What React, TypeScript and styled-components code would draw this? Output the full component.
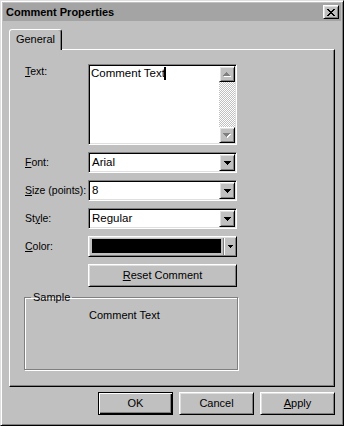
import styled, { createGlobalStyle, css } from 'styled-components';

const GlobalStyle = createGlobalStyle`
  html, body {
    margin: 0;
    padding: 0;
    background: #c0c0c0;
  }
  body {
    font-family: "Liberation Sans", Arial, sans-serif;
    font-size: 10.5px;
    line-height: 13px;
    color: #000;
  }
  * { box-sizing: border-box; }
`;

const raised = css`
  border: 1px solid;
  border-color: #fff #000 #000 #fff;
  box-shadow: inset 1px 1px #dfdfdf, inset -1px -1px #808080;
  background: #c0c0c0;
`;

const sunken = css`
  border: 1px solid;
  border-color: #808080 #fff #fff #808080;
  box-shadow: inset 1px 1px #000, inset -1px -1px #dfdfdf;
  padding: 1px;
`;

const Window = styled.div`
  width: 344px;
  height: 426px;
  background: #c0c0c0;
  border: 1px solid;
  border-color: #dfdfdf #000 #000 #dfdfdf;
  box-shadow: inset 1px 1px #fff, inset -1px -1px #808080;
  padding: 2px;
  display: flex;
  flex-direction: column;
`;

const TitleBar = styled.div`
  height: 18px;
  background: #a4a4a4;
  display: flex;
  align-items: center;
  padding: 0 2px 0 3px;
`;

const Title = styled.span`
  flex: 1;
  font-size: 11px;
  font-weight: bold;
`;

const CloseButton = styled.div`
  ${raised};
  width: 16px;
  height: 14px;
  display: flex;
  align-items: center;
  justify-content: center;
`;

const Body = styled.div`
  flex: 1;
  padding: 8px 6px 8px 6px;
  display: flex;
  flex-direction: column;
`;

const TabStrip = styled.div`
  display: flex;
  margin-bottom: -1px;
`;

const Tab = styled.div`
  position: relative;
  z-index: 1;
  width: 53px;
  height: 21px;
  background: #c0c0c0;
  border: 1px solid;
  border-bottom: none;
  border-color: #fff #000 transparent #fff;
  border-radius: 3px 3px 0 0;
  box-shadow: inset -1px 0 #808080;
  display: flex;
  align-items: center;
  justify-content: center;
  padding-bottom: 1px;
  font-size: 11px;
`;

const Panel = styled.div`
  height: 338px;
  border: 1px solid;
  border-color: #fff #000 #000 #fff;
  box-shadow: inset -1px -1px #808080;
  padding: 14px 0 0 15px;
`;

const Form = styled.div`
  display: grid;
  grid-template-columns: 63px 149px;
  grid-template-rows: 81px 21px 21px 21px 21px 23px auto;
  row-gap: 7px;
`;

const Label = styled.div<{ $top?: boolean }>`
  display: flex;
  align-items: ${({ $top }) => ($top ? 'flex-start' : 'center')};
  padding-top: ${({ $top }) => ($top ? '1px' : '0')};
  white-space: nowrap;
`;

const TextField = styled.div`
  ${sunken};
  background: #fff;
  display: flex;
`;

const TextContent = styled.div`
  flex: 1;
  padding: 1px;
  white-space: nowrap;
  font-size: 11.5px;
`;

const Caret = styled.span`
  display: inline-block;
  width: 2px;
  height: 13px;
  background: #000;
  vertical-align: top;
  margin-left: -1px;
`;

const ScrollBar = styled.div`
  width: 16px;
  display: flex;
  flex-direction: column;
`;

const ScrollButton = styled.div`
  ${raised};
  height: 16px;
  display: flex;
  align-items: center;
  justify-content: center;
`;

const ScrollTrack = styled.div`
  flex: 1;
  background: repeating-conic-gradient(#fff 0 25%, #c0c0c0 0 50%) 0 0 / 2px 2px;
`;

const Combo = styled.div`
  ${sunken};
  background: #fff;
  display: flex;
`;

const ComboValue = styled.div`
  flex: 1;
  display: flex;
  align-items: center;
  padding-left: 2px;
  font-size: 11.5px;
`;

const ComboButton = styled.div`
  ${raised};
  width: 16px;
  display: flex;
  align-items: center;
  justify-content: center;
`;

const ColorPicker = styled.div`
  ${raised};
  display: flex;
  padding: 2px 2px 3px 3px;
`;

const Swatch = styled.div<{ $color: string }>`
  flex: 1;
  background: ${({ $color }) => $color};
`;

const Divider = styled.div`
  width: 2px;
  margin: -1px 2px -2px 2px;
  border-left: 1px solid #808080;
  border-right: 1px solid #fff;
`;

const ColorArrow = styled.div`
  width: 7px;
  display: flex;
  align-items: center;
  justify-content: center;
`;

const PushButton = styled.button<{ $isDefault?: boolean; $block?: boolean }>`
  ${raised};
  width: ${({ $block }) => ($block ? '100%' : '75px')};
  height: 23px;
  padding: 0;
  font: inherit;
  font-size: 11px;
  color: #000;
  ${({ $isDefault }) =>
    $isDefault &&
    css`
      border-color: #000;
      box-shadow: inset 1px 1px #fff, inset -1px -1px #000, inset -2px -2px #808080;
    `}
`;

const GroupBox = styled.fieldset`
  grid-column: 1 / -1;
  margin: -3px 0 0 -1px;
  padding: 0;
  width: 214px;
  height: 79px;
  min-inline-size: 0;
  border: 1px solid #808080;
  box-shadow: inset 1px 1px #fff, 1px 1px #fff;
`;

const Legend = styled.legend`
  margin-left: 6px;
  padding: 0 2px;
  font-size: 11px;
`;

const SampleText = styled.div`
  padding: 5px 0 0 64px;
  font-size: 11px;
`;

const ButtonRow = styled.div`
  margin-top: 5px;
  display: flex;
  justify-content: flex-end;
  gap: 6px;
`;

const PixelIcon = ({ rows, color, shadow }: { rows: string[]; color: string; shadow?: string }) => {
  const extra = shadow ? 1 : 0;
  const cells: [number, number][] = [];
  rows.forEach((r, y) => [...r].forEach((c, x) => c === '1' && cells.push([x, y])));
  return (
    <svg width={rows[0].length + extra} height={rows.length + extra} shapeRendering="crispEdges" style={{ display: 'block' }}>
      {shadow && cells.map(([x, y]) => <rect key={`s${x}-${y}`} x={x + 1} y={y + 1} width={1} height={1} fill={shadow} />)}
      {cells.map(([x, y]) => <rect key={`${x}-${y}`} x={x} y={y} width={1} height={1} fill={color} />)}
    </svg>
  );
};

const CLOSE = ['11000011', '01100110', '00111100', '00011000', '00111100', '01100110', '11000011'];
const DOWN = ['1111111', '0111110', '0011100', '0001000'];
const UP = [...DOWN].reverse();
const SMALL_DOWN = ['11111', '01110', '00100'];

const Dropdown = ({ value }: { value: string }) => (
  <Combo>
    <ComboValue>{value}</ComboValue>
    <ComboButton>
      <PixelIcon rows={DOWN} color="#000" />
    </ComboButton>
  </Combo>
);

export default function App() {
  return (
    <>
      <GlobalStyle />
      <Window>
        <TitleBar>
          <Title>Comment Properties</Title>
          <CloseButton>
            <PixelIcon rows={CLOSE} color="#000" />
          </CloseButton>
        </TitleBar>
        <Body>
          <TabStrip>
            <Tab>General</Tab>
          </TabStrip>
          <Panel>
            <Form>
              <Label $top>
                <span><u>T</u>ext:</span>
              </Label>
              <TextField>
                <TextContent>
                  Comment Text<Caret />
                </TextContent>
                <ScrollBar>
                  <ScrollButton>
                    <PixelIcon rows={UP} color="#808080" shadow="#fff" />
                  </ScrollButton>
                  <ScrollTrack />
                  <ScrollButton>
                    <PixelIcon rows={DOWN} color="#808080" shadow="#fff" />
                  </ScrollButton>
                </ScrollBar>
              </TextField>

              <Label>
                <span><u>F</u>ont:</span>
              </Label>
              <Dropdown value="Arial" />

              <Label>
                <span><u>S</u>ize (points):</span>
              </Label>
              <Dropdown value="8" />

              <Label>
                <span>St<u>y</u>le:</span>
              </Label>
              <Dropdown value="Regular" />

              <Label>
                <span><u>C</u>olor:</span>
              </Label>
              <ColorPicker>
                <Swatch $color="#000" />
                <Divider />
                <ColorArrow>
                  <PixelIcon rows={SMALL_DOWN} color="#000" />
                </ColorArrow>
              </ColorPicker>

              <span />
              <PushButton $block>
                <u>R</u>eset Comment
              </PushButton>

              <GroupBox>
                <Legend>Sample</Legend>
                <SampleText>Comment Text</SampleText>
              </GroupBox>
            </Form>
          </Panel>
          <ButtonRow>
            <PushButton $isDefault>OK</PushButton>
            <PushButton>Cancel</PushButton>
            <PushButton>
              <u>A</u>pply
            </PushButton>
          </ButtonRow>
        </Body>
      </Window>
    </>
  );
}
